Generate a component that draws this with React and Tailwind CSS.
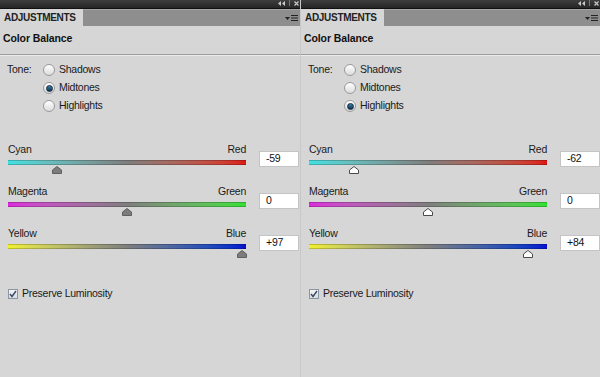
import React from 'react';

const sliders = [
  { left: 'Cyan', right: 'Red', bar: 'bg-gradient-to-r from-[#3fe0e0] via-[#7e7e7e] to-[#dc1414]' },
  { left: 'Magenta', right: 'Green', bar: 'bg-gradient-to-r from-[#dc28dc] via-[#7e7e7e] to-[#2ee02e]' },
  { left: 'Yellow', right: 'Blue', bar: 'bg-gradient-to-r from-[#f0f028] via-[#7e7e7e] to-[#0a0ad0]' },
];

function Thumb({ pos, hollow }) {
  // value -100..100 mapped onto the 238px track
  const x = ((pos + 100) / 200) * 238;
  return (
    <svg
      className="absolute top-[6px]"
      style={{ left: x - 5 }}
      width="10"
      height="8"
      viewBox="0 0 10 8"
    >
      <path
        d="M5 0.5 L9.5 4 L9.5 7.5 L0.5 7.5 L0.5 4 Z"
        fill={hollow ? '#ffffff' : '#7c7c7c'}
        stroke={hollow ? '#4a4a4a' : '#606060'}
        strokeWidth="1"
        strokeLinejoin="round"
      />
    </svg>
  );
}

function Radio({ checked }) {
  return (
    <span className="w-[12px] h-[12px] rounded-full border border-[#9a9a9a] bg-gradient-to-b from-[#ffffff] to-[#dcdcdc] flex items-center justify-center">
      {checked && (
        <span className="w-[7px] h-[7px] rounded-full bg-gradient-to-b from-[#3f7fa8] to-[#12354f] border border-[#0e2a40]" />
      )}
    </span>
  );
}

function Panel({ tone, values, hollow, divider }) {
  return (
    <div className={`w-[300px] flex flex-col ${divider ? 'border-l border-[#c8c8c8]' : ''}`}>
      {/* title bar */}
      <div className="h-[9px] bg-gradient-to-b from-[#3e3e3e] to-[#262626] border-b border-[#111] flex items-start justify-end pr-[1px] gap-[4px]">
        <svg width="7" height="5" viewBox="0 0 7 5" className="mt-[1px]">
          <path d="M3 0 L0 2.5 L3 5 Z M7 0 L4 2.5 L7 5 Z" fill="#c8c8c8" />
        </svg>
        <span className="w-[1px] h-[6px] bg-[#777]" />
        <svg width="5" height="5" viewBox="0 0 5 5" className="mt-[1px]">
          <path d="M0.5 0.5 L4.5 4.5 M4.5 0.5 L0.5 4.5" stroke="#c8c8c8" strokeWidth="1.2" />
        </svg>
      </div>

      {/* tab row */}
      <div className="h-[17px] flex bg-[#8e8e8e]">
        <div className="w-[83px] bg-[#d6d6d6] pl-[4px] flex items-center text-[10px] tracking-[-0.3px] font-bold text-[#222]">
          ADJUSTMENTS
        </div>
        <div className="flex-1 border-t border-[#a4a4a4] flex items-center justify-end pr-[2px] gap-[1px]">
          <svg width="5" height="3" viewBox="0 0 5 3">
            <path d="M0 0 L5 0 L2.5 3 Z" fill="#222" />
          </svg>
          <svg width="7" height="6" viewBox="0 0 7 6">
            <path d="M0 0.5 H7 M0 3 H7 M0 5.5 H7" stroke="#222" strokeWidth="1" />
          </svg>
        </div>
      </div>

      {/* header */}
      <div className="h-[29px] pt-[5px] pl-[3px] text-[10.5px] tracking-[-0.1px] font-bold text-[#111] leading-[14px] border-b border-[#9c9c9c]">
        Color Balance
      </div>
      <div className="h-[1px] bg-[#ececec]" />

      {/* tone */}
      <div className="flex mt-[5px] text-[10.5px] tracking-[-0.25px] text-[#1a1a1a]">
        <div className="w-[43px] pl-[7px] h-[18px] flex items-center">Tone:</div>
        <div className="flex flex-col">
          {['Shadows', 'Midtones', 'Highlights'].map((t) => (
            <div key={t} className="h-[18px] flex items-center gap-[4px]">
              <Radio checked={tone === t} />
              <span>{t}</span>
            </div>
          ))}
        </div>
      </div>

      {/* sliders */}
      <div className="mt-[27px] flex flex-col">
        {sliders.map((s, i) => (
          <div key={s.left} className="h-[42px] flex text-[10.5px] tracking-[-0.25px] text-[#1a1a1a]">
            <div className="w-[238px] ml-[8px] flex flex-col">
              <div className="h-[14px] leading-[14px] flex justify-between">
                <span>{s.left}</span>
                <span>{s.right}</span>
              </div>
              <div className="relative mt-[4px]">
                <div className={`h-[5px] border-y border-black/20 ${s.bar}`} />
                <Thumb pos={values[i]} hollow={hollow} />
              </div>
            </div>
            <div className="ml-[13px] mt-[9px] w-[40px] h-[16px] bg-white border border-[#c4c4c4] pl-[6px] flex items-center text-[#111]">
              {values[i] > 0 ? `+${values[i]}` : values[i]}
            </div>
          </div>
        ))}
      </div>

      {/* preserve luminosity */}
      <div className="mt-[18px] ml-[8px] flex items-center gap-[4px] text-[10.5px] tracking-[-0.25px] text-[#1a1a1a]">
        <span className="w-[10px] h-[10px] border border-[#8a96a2] bg-gradient-to-b from-[#f4f4f4] to-[#d8dde2] flex items-center justify-center">
          <svg width="8" height="8" viewBox="0 0 8 8">
            <path d="M1 4 L3 6.5 L7 1" fill="none" stroke="#3a4a66" strokeWidth="1.4" />
          </svg>
        </span>
        <span>Preserve Luminosity</span>
      </div>
    </div>
  );
}

export default function App() {
  return (
    <div
      className="w-[600px] h-[377px] bg-[#d6d6d6] flex overflow-hidden"
      style={{ fontFamily: '"Liberation Sans", Arial, sans-serif' }}
    >
      <Panel tone="Midtones" values={[-59, 0, 97]} />
      <Panel tone="Highlights" values={[-62, 0, 84]} hollow divider />
    </div>
  );
}
